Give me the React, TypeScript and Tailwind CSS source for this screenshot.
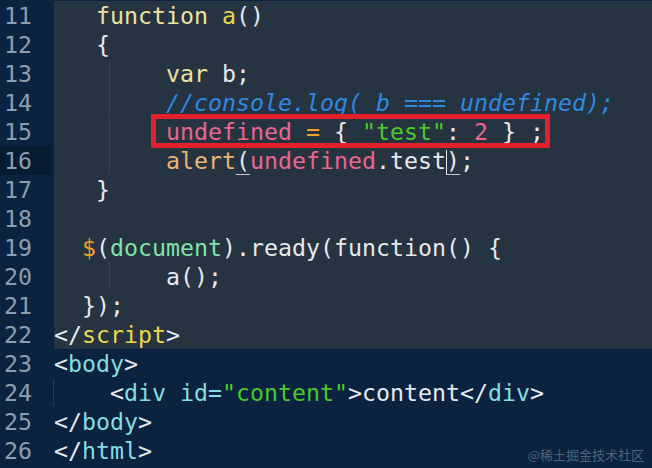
import React from 'react';

type Tok = [string, string?];

const W = 'text-[#e6e9ee]';
const KHAKI = 'text-[#ece3a0]';
const YEL = 'text-[#e9d84e]';
const PINK = 'text-[#e8668f]';
const ORANGE = 'text-[#f0a02c]';
const GREEN = 'text-[#4cc82a]';
const TAN = 'text-[#e9b56e]';
const MINT = 'text-[#7fe3ab]';
const CYAN = 'text-[#86dde2]';
const COMMENT = 'text-[#2d8ae0] italic';

interface Line {
  n: number;
  indent: number;
  guide?: number;
  toks: Tok[];
  lower?: boolean;
  boxed?: boolean;
}

const lines: Line[] = [
  { n: 11, indent: 3, toks: [['function', KHAKI], [' '], ['a', YEL], ['()']] },
  { n: 12, indent: 3, toks: [['{']] },
  { n: 13, indent: 8, guide: 4, toks: [['var', KHAKI], [' b;']] },
  { n: 14, indent: 8, guide: 4, toks: [['//console.log( b === undefined);', COMMENT]] },
  {
    n: 15, indent: 8, guide: 4, boxed: true,
    toks: [['undefined', PINK], [' '], ['=', ORANGE], [' { '], ['"test"', GREEN], [': '], ['2', PINK], [' } ;']],
  },
  { n: 16, indent: 8, guide: 4, toks: [] },
  { n: 17, indent: 3, toks: [['}']] },
  { n: 18, indent: 0, toks: [] },
  { n: 19, indent: 2, toks: [['$', ORANGE], ['('], ['document', MINT], [').ready(function() {']] },
  { n: 20, indent: 8, guide: 4, toks: [['a();']] },
  { n: 21, indent: 2, toks: [['});']] },
  { n: 22, indent: 0, toks: [['</'], ['script', YEL], ['>']] },
  { n: 23, indent: 0, lower: true, toks: [['<'], ['body', CYAN], ['>']] },
  {
    n: 24, indent: 4, guide: 0, lower: true,
    toks: [['<'], ['div', CYAN], [' '], ['id=', CYAN], ['"content"', GREEN], ['>content</'], ['div', CYAN], ['>']],
  },
  { n: 25, indent: 0, lower: true, toks: [['</'], ['body', CYAN], ['>']] },
  { n: 26, indent: 0, lower: true, toks: [['</'], ['html', CYAN], ['>']] },
];

function Indent({ count, guide }: { count: number; guide?: number }) {
  if (count === 0) return null;
  if (guide === undefined) return <span>{' '.repeat(count)}</span>;
  return (
    <>
      {guide > 0 && <span>{' '.repeat(guide)}</span>}
      <span className="-ml-px border-l border-dotted border-[#46566a]">{' '.repeat(count - guide)}</span>
    </>
  );
}

function AlertLine() {
  return (
    <>
      <span className={TAN}>alert</span>
      <span className="border-b border-[#c8ccd2]">(</span>
      <span className={PINK}>undefined</span>
      <span>.test</span>
      <span className="relative border-b border-[#c8ccd2]">
        <span className="absolute left-0 top-[3px] h-[24px] w-[1.5px] bg-[#e8ecf0]" />
        )
      </span>
      <span>;</span>
    </>
  );
}

export default function App() {
  return (
    <div
      className="relative w-[652px] h-[468px] overflow-hidden bg-[#0b2340] pt-[1px] text-[23.25px] leading-[29px] text-[#e6e9ee]"
      style={{ fontFamily: '"DejaVu Sans Mono", "Liberation Mono", monospace' }}
    >
      {lines.map(l => (
        <div key={l.n} className="flex h-[29px]">
          <div className="w-[54px] shrink-0 text-[#8b9db1]">
            <div className={`w-[50px] pl-[4px] ${l.n === 16 ? 'bg-[#061a30]' : ''}`}>{l.n}</div>
          </div>
          <div className={`flex-1 whitespace-pre ${l.lower ? 'bg-[#0b2340]' : 'bg-[#263341]'} ${W}`}>
            <Indent count={l.indent} guide={l.guide} />
            <span className={l.boxed ? 'relative' : ''}>
              {l.boxed && (
                <span className="absolute left-[-15px] right-[-6px] top-[-4px] bottom-[-3px] border-[5px] border-[#e3202b]" />
              )}
              {l.n === 16 ? <AlertLine /> : l.toks.map((t, i) => (
                <span key={i} className={t[1] ?? ''}>{t[0]}</span>
              ))}
            </span>
          </div>
        </div>
      ))}
      <div className="absolute right-[8px] bottom-[5px] text-[13px] leading-[16px] text-[#51627a]"
        style={{ fontFamily: '"Noto Sans CJK SC", sans-serif' }}>
        @稀土掘金技术社区
      </div>
    </div>
  );
}
